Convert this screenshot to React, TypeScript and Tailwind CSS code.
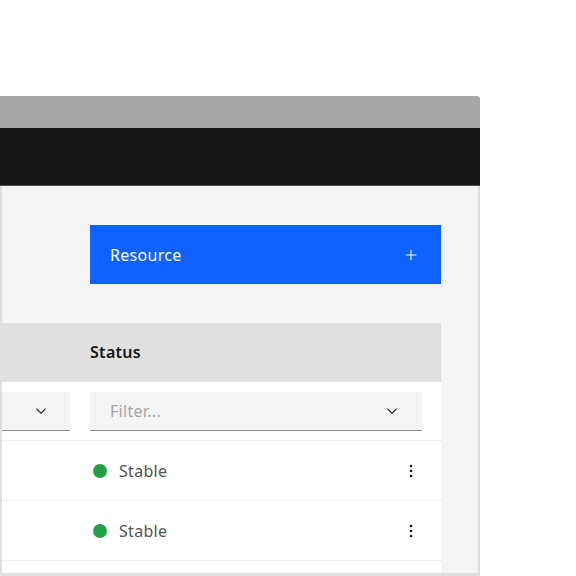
import React from "react";

const font = { fontFamily: '"Noto Sans", "Open Sans", sans-serif' };

function ChevronDown() {
  return (
    <svg width="16" height="16" viewBox="0 0 16 16" fill="#161616">
      <path d="M8 11L3 6l.7-.7L8 9.6l4.3-4.3.7.7z" />
    </svg>
  );
}

function Plus() {
  return (
    <svg width="18" height="18" viewBox="0 0 32 32" fill="#ffffff">
      <path d="M17 15V6.5h-2V15H6.5v2H15v8.5h2V17h8.5v-2z" />
    </svg>
  );
}

function Kebab() {
  return (
    <svg width="16" height="16" viewBox="0 0 16 16" fill="#161616">
      <circle cx="8" cy="3" r="1.3" />
      <circle cx="8" cy="8" r="1.3" />
      <circle cx="8" cy="13" r="1.3" />
    </svg>
  );
}

function StatusRow() {
  return (
    <div className="flex h-[60px] items-center border-t border-dotted border-[#e0e0e0] bg-white">
      <div className="w-[88px] shrink-0" />
      <div className="flex flex-1 items-center pr-[22px]">
        <span className="ml-[3px] h-[14px] w-[14px] rounded-full bg-[#24a148]" />
        <span className="ml-[12px] text-[16px] tracking-[0.3px] text-[#525252]">Stable</span>
        <span className="ml-auto flex">
          <Kebab />
        </span>
      </div>
    </div>
  );
}

export default function App() {
  return (
    <div className="h-[576px] w-[576px] overflow-hidden bg-white" style={font}>
      <div className="h-[96px]" />
      <div className="flex h-[480px] w-[480px] flex-col overflow-hidden rounded-tr-[3px]">
        <div className="h-[32px] shrink-0 bg-[#a8a8a8]" />
        <div className="h-[58px] shrink-0 border-b border-[#4f4f4f] bg-[#161616]" />
        <div className="flex flex-1 flex-col overflow-hidden border-x-2 border-b-[3px] border-[#e0e0e0] bg-[#f4f4f4]">
          <div className="h-[39px] shrink-0" />
          <div className="ml-[88px] flex h-[59px] w-[351px] shrink-0 items-center justify-between bg-[#0f62fe] pl-[20px] pr-[21px] text-white">
            <span className="pt-[1px] text-[16px] tracking-[0.3px]">Resource</span>
            <Plus />
          </div>
          <div className="h-[39px] shrink-0" />
          <div className="flex w-[439px] flex-1 flex-col">
            <div className="flex h-[58px] shrink-0 items-center bg-[#e0e0e0]">
              <div className="w-[88px] shrink-0" />
              <span className="text-[16px] font-semibold tracking-[0.3px] text-[#161616]">Status</span>
            </div>
            <div className="flex h-[59px] shrink-0 items-center border-t border-dotted border-[#d0d0d0] bg-white">
              <div className="flex h-[39px] w-[68px] shrink-0 items-center justify-end border-b border-[#8d8d8d] bg-[#f4f4f4] pr-[21px]">
                <ChevronDown />
              </div>
              <div className="w-[20px] shrink-0" />
              <div className="flex h-[39px] w-[332px] items-center justify-between border-b border-[#8d8d8d] bg-[#f4f4f4] pl-[20px] pr-[22px]">
                <span className="text-[16px] tracking-[0.3px] text-[#a8a8a8]">Filter...</span>
                <ChevronDown />
              </div>
            </div>
            <StatusRow />
            <StatusRow />
            <div className="flex-1 border-t border-dotted border-[#e0e0e0] bg-white" />
          </div>
        </div>
      </div>
    </div>
  );
}
